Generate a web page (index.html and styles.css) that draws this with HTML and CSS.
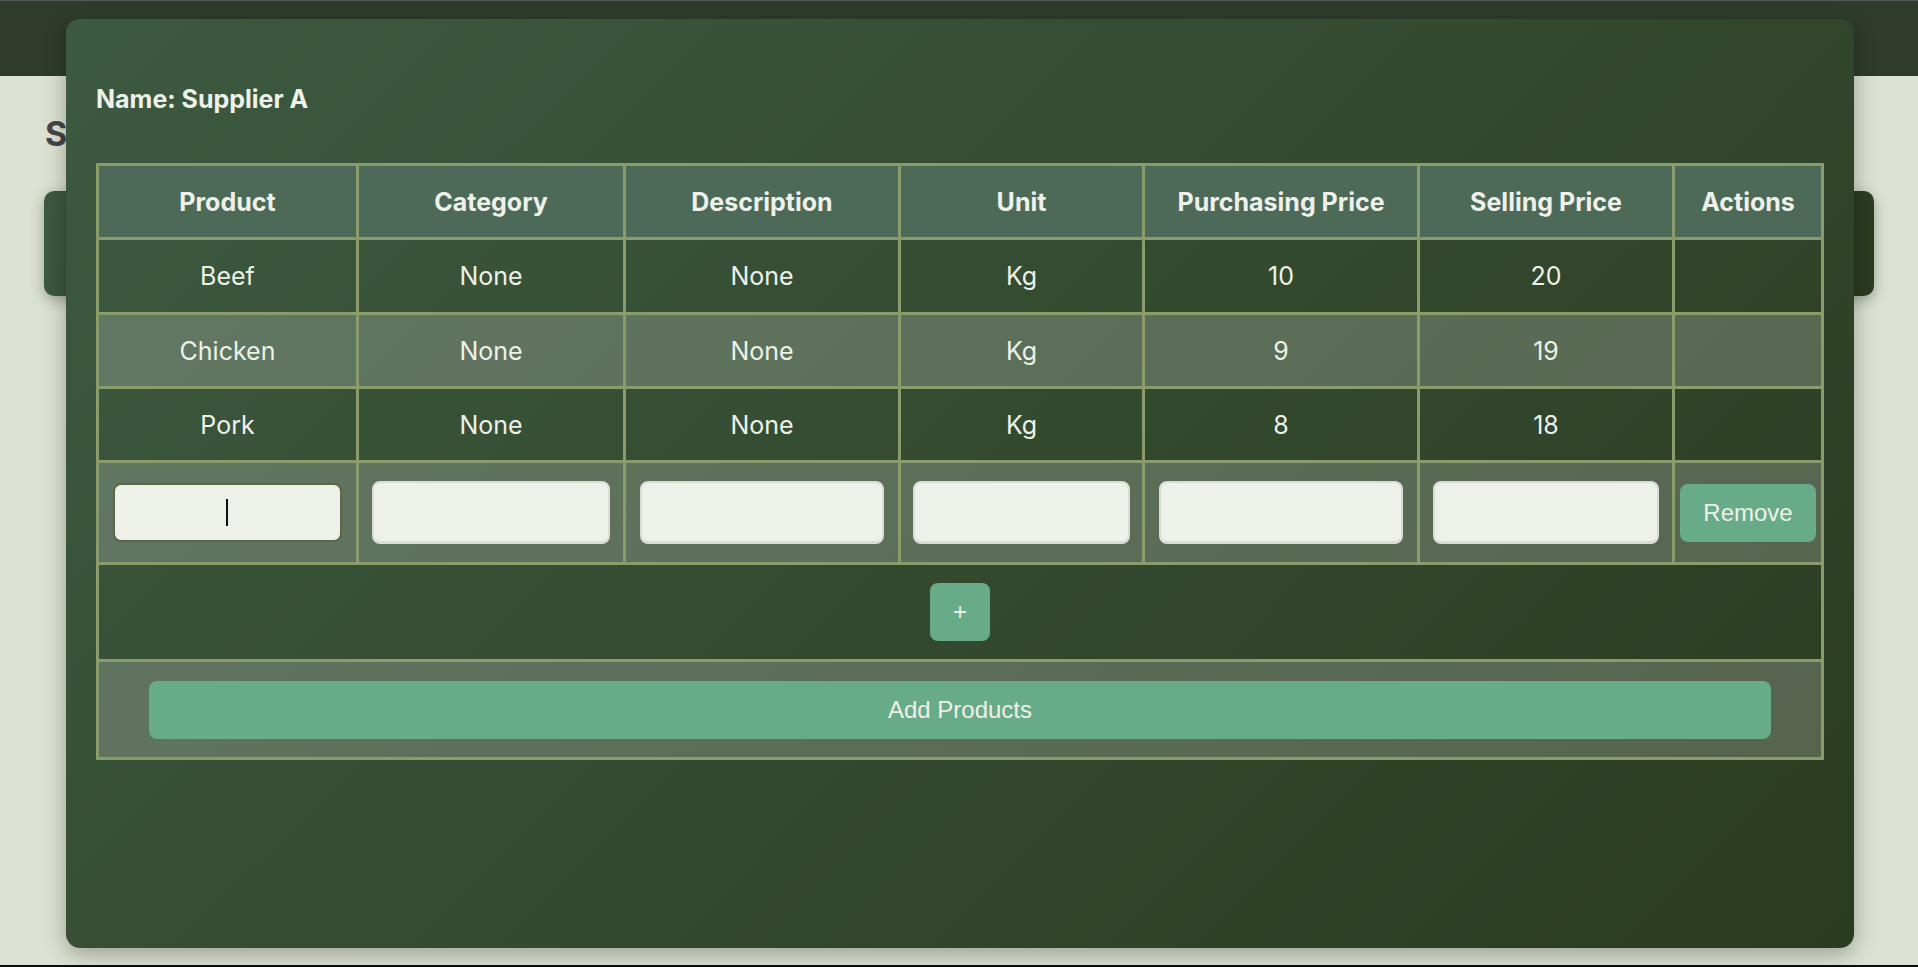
FILE: index.html
```html
<!DOCTYPE html>
<html lang="en">
<head>
<meta charset="utf-8">
<title>Suppliers</title>
<link rel="stylesheet" href="styles.css">
</head>
<body>
  <header class="topbar"></header>
  <main class="page">
    <h1 class="page-title">Suppliers</h1>
    <div class="card"></div>
  </main>

  <div class="modal">
    <h3 class="modal-title">Name: Supplier A</h3>
    <table class="products">
      <colgroup>
        <col class="c1"><col class="c2"><col class="c3"><col class="c4"><col class="c5"><col class="c6"><col>
      </colgroup>
      <thead>
        <tr>
          <th>Product</th>
          <th>Category</th>
          <th>Description</th>
          <th>Unit</th>
          <th>Purchasing Price</th>
          <th>Selling Price</th>
          <th>Actions</th>
        </tr>
      </thead>
      <tbody>
        <tr class="row-first">
          <td>Beef</td><td>None</td><td>None</td><td>Kg</td><td>10</td><td>20</td><td></td>
        </tr>
        <tr>
          <td>Chicken</td><td>None</td><td>None</td><td>Kg</td><td>9</td><td>19</td><td></td>
        </tr>
        <tr>
          <td>Pork</td><td>None</td><td>None</td><td>Kg</td><td>8</td><td>18</td><td></td>
        </tr>
        <tr class="input-row">
          <td><span class="field-wrap focused"><input class="field" type="text"><span class="caret"></span></span></td>
          <td><span class="field-wrap"><input class="field" type="text"></span></td>
          <td><span class="field-wrap"><input class="field" type="text"></span></td>
          <td><span class="field-wrap"><input class="field" type="text"></span></td>
          <td><span class="field-wrap"><input class="field" type="text"></span></td>
          <td><span class="field-wrap"><input class="field" type="text"></span></td>
          <td class="action-cell"><button class="btn btn-remove" type="button">Remove</button></td>
        </tr>
        <tr class="plus-row">
          <td colspan="7"><button class="btn btn-plus" type="button">+</button></td>
        </tr>
        <tr class="add-row">
          <td colspan="7" class="add-cell"><button class="btn btn-add" type="button">Add Products</button></td>
        </tr>
      </tbody>
    </table>
  </div>
</body>
</html>
```

FILE: styles.css
```css
html, body {
  margin: 0;
  padding: 0;
}

body {
  position: relative;
  box-sizing: border-box;
  height: 967px;
  overflow: hidden;
  background: #dce2d3;
  border-top: 1px solid #565956;
  border-bottom: 2px solid #0c0c0c;
  font-family: "Inter", "Open Sans", "Liberation Sans", sans-serif;
  color: #eef1ea;
}

.topbar {
  height: 75px;
  background: #2f3c2c;
}

.page {
  padding: 0 44px;
}

.page-title {
  margin: 37px 0 37px 1px;
  font-size: 34px;
  line-height: 41px;
  font-weight: 700;
  color: #454545;
}

.card {
  height: 105px;
  border-radius: 10px;
  background: linear-gradient(135deg, #3c5a40 0%, #2b3b1f 100%);
  box-shadow: 0 4px 14px rgba(0, 0, 0, 0.3);
}

.modal {
  position: absolute;
  left: 66px;
  top: 18px;
  width: 1788px;
  height: 929px;
  box-sizing: border-box;
  padding: 0 30px;
  border-radius: 14px;
  background: linear-gradient(135deg, #3c5a40 0%, #2b3b1f 100%);
  box-shadow: 0 6px 22px rgba(0, 0, 0, 0.3);
}

.modal-title {
  margin: 0;
  padding-top: 65px;
  font-size: 25px;
  line-height: 30px;
  font-weight: 700;
  color: #eef1ea;
}

.products {
  margin-top: 49px;
  width: 100%;
  table-layout: fixed;
  border-collapse: collapse;
  border: 3px solid #8a9b6c;
}

.c1 { width: 260px; }
.c2 { width: 267px; }
.c3 { width: 275px; }
.c4 { width: 244px; }
.c5 { width: 275px; }
.c6 { width: 255px; }

.products th,
.products td {
  border: 3px solid #8a9b6c;
  height: 71px;
  padding: 0 6px;
  text-align: center;
  vertical-align: middle;
  font-size: 25px;
  line-height: 30px;
  color: #eef1ea;
}

.products th {
  background: #4d6a58;
  font-weight: 700;
}

.products td {
  font-weight: 400;
}

.products .row-first td {
  height: 72px;
}

.products tbody tr:nth-child(even) td {
  background: rgba(255, 255, 255, 0.2);
}

.products .input-row td {
  height: 99px;
  padding: 0;
}

.products .input-row .action-cell {
  padding: 0 5px;
}

.products .plus-row td {
  height: 94px;
}

.products .add-row td {
  height: 95px;
}

.products .add-row .add-cell {
  padding: 0 50px;
}

.field-wrap {
  position: relative;
  display: block;
  width: 90%;
  margin: 0 auto;
}

.field {
  display: block;
  box-sizing: border-box;
  width: 100%;
  height: 63px;
  margin: 0;
  padding: 0 10px;
  border: 2px solid #dadcd6;
  border-bottom-width: 3px;
  border-radius: 8px;
  background: #eef1ea;
  font-family: "Liberation Sans", Arial, sans-serif;
  font-size: 20px;
  text-align: center;
  outline: none;
}

.field-wrap.focused .field {
  width: calc(100% - 2px);
  height: 59px;
  margin: 0 auto;
  border: 2px solid #5a6944;
}

.caret {
  position: absolute;
  left: 50%;
  top: 50%;
  width: 2px;
  height: 27px;
  margin-left: -1px;
  margin-top: -14px;
  background: #111;
  pointer-events: none;
}

.btn {
  border: none;
  border-radius: 8px;
  background: #68ab88;
  color: #eef1ea;
  font-family: "Liberation Sans", Arial, sans-serif;
  font-size: 24px;
  line-height: 28px;
  cursor: pointer;
}

.btn-remove {
  display: block;
  width: 100%;
  height: 58px;
  padding: 0;
}

.btn-plus {
  width: 60px;
  height: 58px;
  padding: 0;
}

.btn-add {
  display: block;
  width: 100%;
  height: 58px;
}
```
